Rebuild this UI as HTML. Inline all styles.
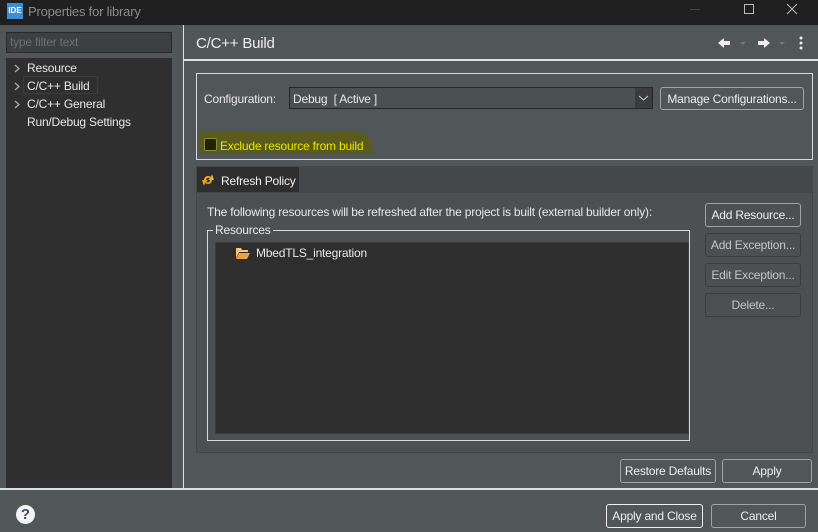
<!DOCTYPE html>
<html><head><meta charset="utf-8"><style>
*{margin:0;padding:0;box-sizing:border-box}
body{width:818px;height:532px;background:#515659;font-family:"Liberation Sans",sans-serif;font-size:12px;color:#e8e8e8;position:relative;overflow:hidden}
.a{position:absolute}
.btn{position:absolute;border:1px solid #a0a4a6;border-radius:3px;text-align:center;line-height:22px;color:#eee;font-size:12px;letter-spacing:-0.2px}
.dis{border-color:#3a3d40;color:#c4c4c4}
.t{position:absolute;white-space:nowrap;letter-spacing:-0.2px}
</style></head><body>
<div class="a" style="left:0;top:0;width:818px;height:25px;background:#202020"></div>
<div class="a" style="left:7px;top:3px;width:16px;height:16px;background:#3a8ed6;color:#fff;font-size:8px;font-weight:bold;line-height:16px;text-align:center">IDE</div>
<div class="t" style="left:28px;top:4px;color:#8c8c8c;font-size:13px">Properties for library</div>
<div class="a" style="left:690px;top:9px;width:10px;height:1px;background:#444"></div>
<div class="a" style="left:744px;top:4px;width:10px;height:10px;border:1px solid #bbb"></div>
<svg class="a" style="left:786px;top:3px" width="12" height="12"><path d="M1 1L11 11M11 1L1 11" stroke="#bbb" stroke-width="1"/></svg>

<div class="a" style="left:6px;top:32px;width:166px;height:21px;background:#3c4043;border:1px solid #2a2a2a"></div>
<div class="t" style="left:10px;top:35px;color:#6c7074">type filter text</div>
<div class="a" style="left:6px;top:58px;width:166px;height:430px;background:#2f2f2f"></div>
<svg class="a" style="left:13px;top:63px" width="8" height="48"><path d="M2 2L6 5.5L2 9M2 20L6 23.5L2 27M2 38L6 41.5L2 45" stroke="#aaa" stroke-width="1.3" fill="none"/></svg>
<div class="t" style="left:27px;top:61px">Resource</div>
<div class="a" style="left:23px;top:76px;width:75px;height:18px;border:1px solid #3d3d3d"></div>
<div class="t" style="left:27px;top:79px">C/C++ Build</div>
<div class="t" style="left:27px;top:97px">C/C++ General</div>
<div class="t" style="left:27px;top:115px">Run/Debug Settings</div>
<div class="a" style="left:183px;top:25px;width:1px;height:463px;background:#e0e0e0"></div>

<div class="t" style="left:196px;top:35px;font-size:15px;color:#eee">C/C++ Build</div>
<svg class="a" style="left:716px;top:35px" width="90" height="16">
<path d="M2 8L8 3V6H14V10H8V13Z" fill="#eee"/><path d="M24 7h6l-3 3z" fill="#777"/>
<path d="M54 8L48 3V6H42V10H48V13Z" fill="#eee"/><path d="M63 7h6l-3 3z" fill="#777"/>
<circle cx="85" cy="3" r="1.5" fill="#eee"/><circle cx="85" cy="8" r="1.5" fill="#eee"/><circle cx="85" cy="13" r="1.5" fill="#eee"/></svg>
<div class="a" style="left:184px;top:59px;width:634px;height:2px;background:#e0e0e0"></div>

<div class="a" style="left:196px;top:73px;width:617px;height:87px;border:1px solid #d8d8d8"></div>
<div class="t" style="left:204px;top:92px">Configuration:</div>
<div class="a" style="left:289px;top:87px;width:364px;height:22px;background:#4b5053;border:1px solid #262626"></div>
<div class="a" style="left:635px;top:88px;width:17px;height:20px;background:#3a3d40"></div>
<svg class="a" style="left:638px;top:94px" width="11" height="8"><path d="M1 2L5.5 6L10 2" stroke="#ccc" fill="none"/></svg>
<div class="t" style="left:293px;top:92px">Debug&nbsp; [ Active ]</div>
<div class="btn" style="left:660px;top:87px;width:144px;height:23px">Manage Configurations...</div>
<div class="a" style="left:199px;top:131px;width:174px;height:22px;background:#5a5b1c;border-radius:8px 30px 4px 10px"></div>
<div class="a" style="left:204px;top:138px;width:13px;height:13px;background:#232300;border:1px solid #8a8a40;border-radius:2px"></div>
<div class="t" style="left:220px;top:139px;color:#e8e800">Exclude resource from build</div>

<div class="a" style="left:196px;top:166px;width:617px;height:26px;background:#45484b"></div>
<div class="a" style="left:197px;top:167px;width:102px;height:25px;background:#2e2e2e"></div>
<svg class="a" style="left:201px;top:172px" width="14" height="16"><path d="M3 9C3 4 7 3 10 5L11 2L13 8L7 8L9 6C7 5 5 6 5 9Z" fill="#f0b030"/><path d="M11 8C11 12 7 13 4 11L3 14L1 8L7 8L5 10C7 11 9 10 9 8Z" fill="#e8a020"/></svg>
<div class="t" style="left:221px;top:174px;color:#f0f0f0">Refresh Policy</div>
<div class="a" style="left:196px;top:192px;width:617px;height:261px;background:#4c5053;border:1px solid #45484b"></div>
<div class="t" style="left:207px;top:205px">The following resources will be refreshed after the project is built (external builder only):</div>
<div class="a" style="left:207px;top:230px;width:483px;height:211px;border:1px solid #d8d8d8"></div>
<div class="t" style="left:213px;top:223px;background:#4c5053;padding:0 2px">Resources</div>
<div class="a" style="left:215px;top:242px;width:474px;height:192px;background:#2e2e2e;border:1px solid #3d3d3d"></div>
<svg class="a" style="left:235px;top:246px" width="16" height="14"><path d="M1 2h5l1 2h6v2H4L1 12Z" fill="#f4c878"/><path d="M4 7h11l-3 6H1Z" fill="#e8a040"/></svg>
<div class="t" style="left:256px;top:246px">MbedTLS_integration</div>
<div class="btn" style="left:705px;top:203px;width:96px;height:24px">Add Resource...</div>
<div class="btn dis" style="left:705px;top:233px;width:96px;height:24px">Add Exception...</div>
<div class="btn dis" style="left:705px;top:263px;width:96px;height:24px">Edit Exception...</div>
<div class="btn dis" style="left:705px;top:293px;width:96px;height:24px">Delete...</div>

<div class="btn" style="left:620px;top:459px;width:96px;height:24px">Restore Defaults</div>
<div class="btn" style="left:722px;top:459px;width:90px;height:24px">Apply</div>
<div class="a" style="left:0;top:488px;width:818px;height:2px;background:#e0e0e0"></div>

<div class="a" style="left:16px;top:505px;width:19px;height:19px;border-radius:50%;background:#f4f4f4;color:#3a4a6a;font-weight:bold;font-size:15px;line-height:19px;text-align:center">?</div>
<div class="btn" style="left:606px;top:504px;width:97px;height:24px;border-color:#f0f0f0">Apply and Close</div>
<div class="btn" style="left:711px;top:504px;width:95px;height:24px">Cancel</div>
</body></html>
